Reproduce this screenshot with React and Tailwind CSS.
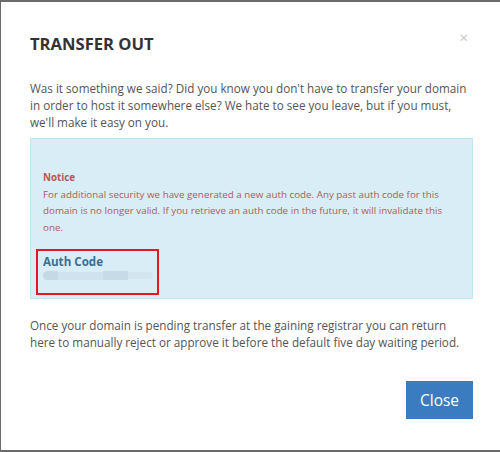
import React from 'react'

const App = () => {
  return (
    <div className="w-[500px] h-[452px] bg-white border-t-2 border-l border-b-2 border-[#6b6b6b] font-['Open_Sans',sans-serif] flex flex-col">
      <div className="flex items-start justify-between pl-[29px] pr-[32px] pt-[30px]">
        <h1 className="text-[16.6px] leading-[24px] font-bold text-[#333]">TRANSFER OUT</h1>
        <span className="text-[15px] leading-[16px] text-[#c4c4c4] mt-[-3px]">×</span>
      </div>
      <div className="pl-[29px] pr-[27px] pt-[24px] flex flex-col">
        <p className="text-[11.7px] leading-[17px] text-[#555]">
          Was it something we said? Did you know you don't have to transfer your domain in order to host it somewhere else? We hate to see you leave, but if you must, we'll make it easy on you.
        </p>
        <div className="mt-[7px] h-[161px] bg-[#d9edf7] border border-[#bce8f1] pl-[12px] pr-[14px] pt-[31px]">
          <div className="text-[9.8px] leading-[16.7px] text-[#b35856]">
            <div className="font-bold">Notice</div>
            <div>
              For additional security we have generated a new auth code. Any past auth code for this domain is no longer valid. If you retrieve an auth code in the future, it will invalidate this one.
            </div>
          </div>
          <div className="mt-[12px] ml-[-7px] w-[123px] h-[46px] border-2 border-[#e01b24] pl-[5px] pt-[2px]">
            <div className="text-[11.6px] leading-[17px] font-bold text-[#3b6e92]">Auth Code</div>
            <div className="flex items-center mt-[1px] h-[10px]">
              <div className="w-[15px] h-[9px] rounded-l-full bg-[#c3d9e6]" />
              <div className="w-[45px] h-[8px] bg-[#cfe2ed]" />
              <div className="w-[25px] h-[9px] bg-[#c6dbe7]" />
              <div className="w-[25px] h-[7px] rounded-r-full bg-[#d3e5ef]" />
            </div>
          </div>
        </div>
        <p className="mt-[18px] text-[11.7px] leading-[17px] text-[#555]">
          Once your domain is pending transfer at the gaining registrar you can return here to manually reject or approve it before the default five day waiting period.
        </p>
        <div className="flex justify-end mt-[30px]">
          <button className="w-[67px] h-[38px] bg-[#3b7bbf] text-white text-[15.5px] leading-[20px]">Close</button>
        </div>
      </div>
    </div>
  )
}

export default App
